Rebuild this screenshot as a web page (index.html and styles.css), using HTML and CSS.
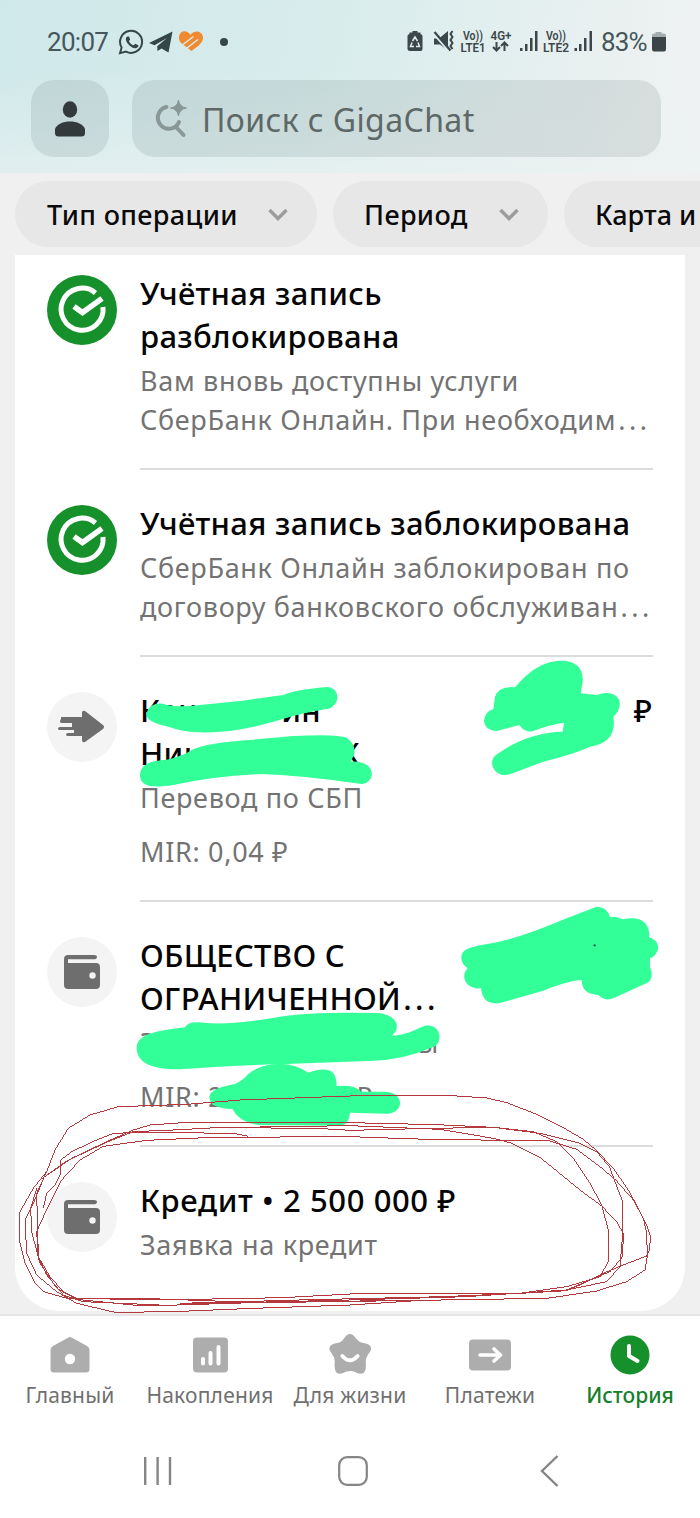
FILE: index.html
```html
<!DOCTYPE html>
<html lang="ru">
<head>
<meta charset="utf-8">
<title>История</title>
<link rel="stylesheet" href="styles.css">
</head>
<body>
<div class="screen">
  <header class="header">
    <div class="status">
      <span class="clock">20:07</span>
      <svg class="st-left" width="116" height="26" viewBox="0 0 116 26">
        <path d="M2 24.2 3.6 18.4A11 11 0 1 1 8 22.600Z" fill="none" stroke="#35464b" stroke-width="2"/>
        <path d="M9.300 7.500c-2 1-1.800 4 .4 7 2.500 3.400 6.600 5.600 8.900 4.600 1.700-.8 2.100-2.200 1.700-2.800l-3-1.600-1.700 1.600c-2-.6-3.900-2.400-4.700-4.400l1.300-1.500-1.200-2.900Z" fill="#35464b"/>
        <path d="M31 14 54.500 2.500 50.500 23.500 43.500 19.500 39.500 22 39.200 17.200 49 9 36.500 16.200Z" fill="#35464b"/>
        <path d="M62.500 13.500C58 6 64.500-.5 70 3.500c1.200.8 1.800 1.500 2.500 2.200C76.500 1 83 1.500 84.800 7c1 4-1.600 7-4 9.500L73.500 22Z" fill="#f08a31"/>
        <path d="M65 15.500 75.500 7.500M69 19 80 10.500" stroke="#d9ebeb" stroke-width="1.500"/>
        <circle cx="106" cy="13" r="4" fill="#35464b"/>
      </svg>
      <svg class="st-right" width="190" height="26" viewBox="0 0 190 26" fill="#3b474a">
        <path d="M4.500 5V3.500h3V2h5v1.500h3V5q2 .5 2 2v13q0 2-2 2H5q-2.500 0-2.500-2V7q0-1.500 2-2Z"/>
        <path d="m7.500 12 2.500-4 2.500 4M13 13.500l1.500 4H11M9 17.500H5.500l1.500-4" fill="none" stroke="#e0eeee" stroke-width="1.500"/>
        <path d="M29 9.500h5l9-7.500v19.500l-8-6h-6Z"/>
        <path d="m28 4 16 18.500" stroke="#e0eeee" stroke-width="2"/><path d="m29.500 3 16 18.500" stroke="#3b474a" stroke-width="2.200"/>
        <path d="m47.500 2-2 3 2 3-2 3 2 3-2 3 2 3" fill="none" stroke="#3b474a" stroke-width="2"/>
        <text x="58" y="11" class="micro" textLength="20" lengthAdjust="spacingAndGlyphs">Vo))</text>
        <text x="55.500" y="23" class="micro" textLength="25" lengthAdjust="spacingAndGlyphs">LTE1</text>
        <text x="85.500" y="11" class="micro" textLength="21" lengthAdjust="spacingAndGlyphs">4G+</text>
        <path d="M91.500 13v8m-3.500-3 3.500 3.500 3.500-3.500M99.500 22v-8m-3.500 3 3.500-3.500 3.500 3.500" fill="none" stroke="#3b474a" stroke-width="2"/>
        <path d="M115 19h2.500v3H115zM120 15h2.500v7H120zM125 9h2.500v13H125zM130 2h2.500v20H130zM169.500 19h2.500v3h-2.500zM174 15h2.500v7H174zM179 9h2.500v13H179zM184.500 2h2.500v20h-2.500z"/>
        <text x="141" y="11" class="micro" textLength="20" lengthAdjust="spacingAndGlyphs">Vo))</text>
        <text x="138" y="23" class="micro" textLength="26" lengthAdjust="spacingAndGlyphs">LTE2</text>
      </svg>
      <span class="percent">83%</span>
      <svg class="batt" width="16" height="22" viewBox="0 0 16 22"><path d="M1 7V4q0-1.500 2-1.500h1.500V1h6v1.500H13q2 0 2 1.500v3Z" fill="#a3adaf"/><path d="M1 6h14v12q0 2.500-2 2.500H3q-2 0-2-2.500Z" fill="#3b4447"/></svg>
    </div>
    <div class="topbar">
      <div class="profile">
        <svg width="32" height="38" viewBox="0 0 32 38" fill="#333a3c"><ellipse cx="16" cy="9.500" rx="7.200" ry="8.300"/><path d="M1 29c2-5 8-7.500 15-7.500S29 24 31 29v4q0 3.500-3.500 3.500h-23Q1 36.500 1 33Z"/></svg>
      </div>
      <div class="search">
        <svg width="34" height="40" viewBox="0 0 34 40"><path d="M12.500 8A11 11 0 1 0 25 23M21.500 27.500 29.500 36" fill="none" stroke="#899796" stroke-width="4" stroke-linecap="round"/><path d="M24.500 1Q25.500 8 32.500 9 25.500 10 24.500 17 23.500 10 16.500 9 23.500 8 24.500 1Z" fill="#899796" stroke="#899796"/></svg>
        <span class="placeholder">Поиск с GigaChat</span>
      </div>
    </div>
  </header>

  <div class="chips">
    <div class="chip chip-type"><span>Тип операции</span><svg width="20" height="13" viewBox="0 0 20 13"><path d="m1.500 2 8.500 8.500L18.500 2" fill="none" stroke="#9c9c9c" stroke-width="3.500"/></svg></div>
    <div class="chip chip-period"><span>Период</span><svg width="20" height="13" viewBox="0 0 20 13"><path d="m1.500 2 8.500 8.500L18.500 2" fill="none" stroke="#9c9c9c" stroke-width="3.500"/></svg></div>
    <div class="chip chip-card"><span>Карта и</span></div>
  </div>

  <main class="list">
    <article class="item item-first">
      <div class="badge green"><svg width="70" height="70" viewBox="0 0 70 70" fill="none" stroke="#fff" stroke-width="5"><path d="M48.500 18A21 21 0 1 0 56 32"/><path d="m27 31.500 8.500 6L55 23.500" stroke-width="5.500"/></svg></div>
      <div class="body">
        <h2 class="title">Учётная запись<br>разблокирована</h2>
        <p class="sub">Вам вновь доступны услуги<br>СберБанк Онлайн. При необходим<span class="dots">...</span></p>
      </div>
    </article>
    <article class="item item-second">
      <div class="badge green"><svg width="70" height="70" viewBox="0 0 70 70" fill="none" stroke="#fff" stroke-width="5"><path d="M48.500 18A21 21 0 1 0 56 32"/><path d="m27 31.500 8.500 6L55 23.500" stroke-width="5.500"/></svg></div>
      <div class="body">
        <h2 class="title">Учётная запись заблокирована</h2>
        <p class="sub">СберБанк Онлайн заблокирован по<br>договору банковского обслуживан<span class="dots">...</span></p>
      </div>
    </article>
    <article class="item item-op">
      <div class="badge"><svg width="70" height="70" viewBox="0 0 70 70" fill="#6e6e6e"><path d="M14 25h21v-4q0-3 3-2l18 14q2 2 0 4L38 50q-3 1-3-2v-4H21q-2 0-2-1.500t2-1.500h6v-3H13q-2 0-2-1.500t2-1.500h12v-4H15q-2 0-2-1.500t1-2.500Z"/></svg></div>
      <div class="body">
        <h2 class="title"><span class="pair pair-name"><span>Кан</span><span>гин</span></span><span class="pair pair-last"><span>Ник</span><span>К</span></span></h2>
        <p class="sub">Перевод по СБП</p>
        <p class="sub bonus">MIR: 0,04 ₽</p>
      </div>
      <div class="amount">₽</div>
    </article>
    <article class="item item-op">
      <div class="badge"><svg width="70" height="70" viewBox="0 0 70 70"><path d="M17 22q0-4 4-4h26q3 0 3 2t-2 2.200H21V26h28q4 0 4 4v18q0 4-4 4H21q-4 0-4-4Z" fill="#6e6e6e"/><circle cx="45.500" cy="38.500" r="3.200" fill="#f4f4f4"/></svg></div>
      <div class="body">
        <h2 class="title">ОБЩЕСТВО С<br>ОГРАНИЧЕННОЙ<span class="dots">...</span></h2>
        <p class="sub"><span class="pair pair-cat"><span>З</span><span>ы</span></span></p>
        <p class="sub bonus"><span class="pair pair-mir"><span>MIR: 2</span><span>₽</span></span></p>
      </div>
    </article>
    <article class="item item-last">
      <div class="badge"><svg width="70" height="70" viewBox="0 0 70 70"><path d="M17 22q0-4 4-4h26q3 0 3 2t-2 2.200H21V26h28q4 0 4 4v18q0 4-4 4H21q-4 0-4-4Z" fill="#6e6e6e"/><circle cx="45.500" cy="38.500" r="3.200" fill="#f4f4f4"/></svg></div>
      <div class="body">
        <h2 class="title title-loan">Кредит • 2 500 000 ₽</h2>
        <p class="sub">Заявка на кредит</p>
      </div>
    </article>
  </main>

  <nav class="tabs">
    <a class="tab"><svg width="44" height="44" viewBox="0 0 44 44"><path d="M20 4.700q2-1.500 4 0L39 13q2.500 1.500 2.500 4v19q0 3.500-3.500 3.500H6q-3.500 0-3.500-3.500V17q0-2.500 2.500-4Z" fill="#adadad"/><circle cx="22" cy="26" r="5.200" fill="#fff"/></svg><span>Главный</span></a>
    <a class="tab"><svg width="44" height="44" viewBox="0 0 44 44"><rect x="5" y="4.500" width="35" height="35" rx="4" fill="#adadad"/><path d="M15 26v4.500M22.500 20v10.500M30.500 14v16.500" stroke="#fff" stroke-width="4" stroke-linecap="round"/></svg><span>Накопления</span></a>
    <a class="tab"><svg width="46" height="46" viewBox="0 0 46 46"><path d="M16.500 6q3-5 6.500-5t6.500 5q2.500 3.500 7.500 4.500 11 2 7 9-5 6-4.500 11 1 12-5 12-4 0-6.500-2-4.500-1.500-9.500 0-3 2-6.500 2-6 0-5-12 .5-5-4.500-11-4-7 7-9 5-1 7-4.500Z" fill="#adadad"/><path d="M15 24q8 9 16 0" fill="none" stroke="#fff" stroke-width="4" stroke-linecap="round"/></svg><span>Для жизни</span></a>
    <a class="tab"><svg width="44" height="44" viewBox="0 0 44 44"><rect x="1" y="6.500" width="42" height="31" rx="4" fill="#adadad"/><path d="M12 22h20m-6-6 6.500 6-6.500 6" fill="none" stroke="#fff" stroke-width="3.600" stroke-linecap="round" stroke-linejoin="round"/></svg><span>Платежи</span></a>
    <a class="tab active"><svg width="44" height="44" viewBox="0 0 44 44"><circle cx="22" cy="22" r="19.500" fill="#16902b"/><path d="M21 13v10l8.500 5" fill="none" stroke="#fff" stroke-width="4" stroke-linecap="round" stroke-linejoin="round"/></svg><span>История</span></a>
  </nav>

  <div class="sysnav">
    <svg width="30" height="30" viewBox="0 0 30 30"><path d="M2.200 1v28M14.600 1v28M27 1v28" stroke="#858585" stroke-width="2.400"/></svg>
    <svg width="30" height="30" viewBox="0 0 30 30"><rect x="1.200" y="1.200" width="27.600" height="27.600" rx="8" fill="none" stroke="#858585" stroke-width="2.200"/></svg>
    <svg width="19" height="32" viewBox="0 0 19 32"><path d="M17.500 1 2 16l15.500 15" fill="none" stroke="#858585" stroke-width="2.400"/></svg>
  </div>

  <svg class="ink" width="700" height="1518" viewBox="0 0 700 1518">
    <g fill="#33ff99">
      <g transform="translate(0 655) scale(.33333)">
        <path d="M440 180C440 150 475 138 500 150Q540 158 600 150L720 138 850 120Q880 105 980 96C1022 98 1022 150 985 161Q910 172 820 200 700 235 600 232 550 232 500 214 440 200 440 180Z"/>
        <path d="M420 360C422 325 455 317 500 314Q550 303 575 285 620 262 760 254L880 243Q1010 236 1040 248 1070 270 1062 300L1052 320C1130 315 1130 382 1085 387Q900 360 780 357 640 363 520 390C455 400 420 395 420 360Z"/>
      </g>
      <g transform="translate(400 655) scale(.33333)">
        <path fill-rule="evenodd" d="M252 198Q254 170 280 162L285 125Q296 92 345 97 410 18 482 17 552 18 548 80L542 115 590 120Q640 102 658 135 664 165 640 185 653 262 570 275 520 298 430 320L330 358C285 372 260 320 288 300Q380 232 488 230L492 203Q450 208 400 228 375 235 358 210L290 228Q255 227 252 198Z"/>
        <path d="M184 910C185 880 205 878 290 862Q370 845 500 790L590 755Q622 755 630 787 645 782 668 793C720 782 750 800 748 848 785 855 780 900 750 910L750 935Q762 965 745 982L640 1030Q615 1040 595 1020 545 1018 545 975 510 975 430 1007L300 1044Q248 1052 243 1000C200 1005 178 965 203 940Q185 928 184 910Z"/>
        <circle cx="584" cy="871" r="3.500" fill="#1d6b45"/>
      </g>
      <g transform="translate(0 905) scale(.33333)">
        <path d="M410 430C410 390 460 378 555 367Q565 345 620 354 700 360 840 335 940 320 1120 324C1185 322 1210 365 1175 392 1225 390 1250 370 1275 362 1320 355 1330 405 1305 424Q1200 470 1100 468L840 478Q700 480 540 493 410 495 410 430Z"/>
        <path d="M628 575Q630 550 705 537 730 525 745 507 780 478 840 476 890 478 925 503C980 485 1010 490 1010 543Q1065 538 1083 560L1150 560C1215 558 1215 625 1160 626L1050 623Q1048 655 1025 662L780 660Q720 655 697 612 628 610 628 575Z"/>
      </g>
    </g>
    <g class="pen" transform="translate(0 1080) scale(.33333)">
      <path d="M140 275 165 210 205 145 270 105 355 80 560 73 720 60 1050 48 1370 48 1460 54 1520 68 1610 103 1690 143 1750 178 1790 212 1840 265 1885 330 1915 385 1940 435 1952 470 1948 510 1940 528 1870 555 1805 582 1750 610 1700 632 1560 640 1050 642 850 653 480 660 230 655 190 635 150 590 115 530 110 340 140 275"/>
      <path d="M110 455 135 400 185 300 240 240 310 199 440 181 640 172 1050 170 1250 177 1370 179 1650 183 1730 208 1800 260 1850 303 1900 360 1930 415 1940 460 1942 528 1935 570 1880 605 1790 633 1640 655 1200 662 850 665 500 676 250 665 190 645 140 585 115 530 110 455"/>
      <path d="M130 385 140 340 165 315 180 285 182 240 215 215 290 180 340 160 430 157 700 160 745 169"/>
      <path d="M135 290 215 235 320 185 400 150 450 135 550 128 1050 128 1310 134 1480 142 1600 155 1670 185 1720 235 1770 310 1805 375 1825 450 1825 545 1800 590 1700 620 1560 640 1330 650 900 660 540 670"/>
      <path d="M120 300 200 243 320 187 400 155 520 150 650 143 1050 137 1320 148 1480 175 1530 188 1620 232 1740 330 1805 378 1850 425 1870 460 1868 530 1830 575 1700 630 1400 650 1050 660 550 672"/>
      <path d="M140 275 100 325 60 395 58 480 75 550 105 610 130 635 200 655 480 657 780 668 1200 662"/>
      <path d="M135 285 100 370 75 420 80 520 110 585 170 635 230 670 345 697 520 695 760 685 1050 675 1250 662"/>
      <path d="M110 325 92 385 95 455 120 550 170 625 230 658 430 678 530 676"/>
      <path d="M670 143 950 145 1050 151 1300 145 1480 142 1620 160 1740 190 1790 215 1828 260 1845 305 1868 365 1868 460 1860 560 1820 605 1700 630"/>
    </g>
  </svg>
</div>
</body>
</html>
```
FILE: styles.css
```css
* { box-sizing: border-box; }
body { margin: 0; font-family: "Noto Sans", "Open Sans", sans-serif; background: #fff; }
.screen { position: relative; width: 700px; height: 1518px; overflow: hidden; display: flex; flex-direction: column; background: #f0f0f0; }

.header { height: 173px; padding: 28px 39px 0 31px; background: linear-gradient(180deg, rgba(236,242,242,0) 40%, rgba(236,242,242,.6)), linear-gradient(100deg, #cfe8ea 0%, #d8ecec 45%, #f0f2f2 100%); }
.status { display: flex; align-items: center; height: 28px; padding-left: 16px; margin-right: -8px; font-family: Roboto, sans-serif; font-size: 26px; color: #46565a; }
.clock { width: 70px; letter-spacing: -.7px; }
.st-left { margin-left: 1px; }
.st-right { margin-left: 171px; flex: none; }
.micro { font: 600 13px Roboto, sans-serif; }
.percent { margin-left: 6px; width: 49px; letter-spacing: -.8px; flex: none; }
.batt { margin-left: 1px; flex: none; }

.topbar { display: flex; gap: 23px; margin-top: 24px; }
.profile { width: 78px; height: 77px; border-radius: 23px; background: rgba(60,85,85,.12); display: flex; align-items: center; justify-content: center; }
.search { flex: 1; height: 77px; border-radius: 23px; background: rgba(60,85,85,.12); display: flex; align-items: center; padding-left: 22px; gap: 14px; }
.placeholder { font-size: 32px; letter-spacing: .4px; padding-top: 1px; color: #5d6867; white-space: nowrap; }

.chips { display: flex; gap: 16px; height: 82px; padding: 8px 0 8px 15px; }
.chip { flex: none; height: 66px; border-radius: 33px; background: #e7e7e7; padding: 0 29px 0 32px; display: flex; align-items: center; justify-content: space-between; font-size: 27px; letter-spacing: .35px; font-weight: 500; color: #0a0a0a; white-space: nowrap; }
.chip-type { width: 302px; }
.chip-period { width: 215px; padding-left: 31px; }
.chip-card { width: 260px; padding-left: 31px; letter-spacing: 0; }

.list { margin: 0 15px; height: 1056px; flex: none; background: #fff; border-radius: 0 0 44px 44px; }
.item { display: flex; position: relative; padding: 33px 0 0 32px; }
.item::after { content: ""; position: absolute; left: 125px; right: 32px; bottom: -1px; height: 2px; background: #dcdcdc; }
.item-first { height: 214px; padding-top: 17px; }
.item-second { height: 187px; }
.item-op { height: 245px; }
.item-last { height: 164px; }
.item-last::after { display: none; }
.badge { width: 70px; height: 70px; border-radius: 50%; background: #f4f4f4; margin: 3px 23px 0 0; flex: none; }
.badge.green { background: #16902b; }
.body { flex: 1; }
.title { margin: 0; font-size: 31px; line-height: 43px; letter-spacing: .32px; font-weight: 500; color: #050505; white-space: nowrap; }
.title-loan { letter-spacing: .6px; }
.sub { margin: 3px 0 0; font-size: 27px; line-height: 39px; letter-spacing: .68px; color: #737373; white-space: nowrap; }
.dots { margin-left: 2px; letter-spacing: 3.5px; }
.bonus { margin-top: 15px; }
.amount { font-size: 31px; line-height: 43px; font-weight: 500; margin-right: 33px; }
.pair { display: flex; justify-content: space-between; }
.pair-name { width: 181px; }
.pair-last { width: 220px; }
.pair-cat { width: 299px; }
.pair-mir { width: 233px; }

.tabs { flex: none; height: 109px; margin-top: 3px; border-top: 2px solid #e5e5e5; background: #fff; display: grid; grid-template-columns: repeat(5, 140px); padding-top: 17px; }
.tab { display: flex; flex-direction: column; align-items: center; font-size: 21px; line-height: 30px; letter-spacing: .2px; color: #707070; white-space: nowrap; }
.tab svg { flex: none; width: 44px; height: 44px; margin-bottom: 3px; }
.tab.active { color: #17802b; font-weight: 500; letter-spacing: 0; }

.sysnav { flex: 1; background: #fff; display: flex; align-items: flex-start; padding: 33px 0 0 143px; gap: 165px; }
.sysnav svg:last-child { margin: -1px 0 0 7px; }

.ink { position: absolute; left: 0; top: 0; }
.pen { fill: none; stroke: #b5383c; stroke-width: 3; shape-rendering: crispEdges; }
```
